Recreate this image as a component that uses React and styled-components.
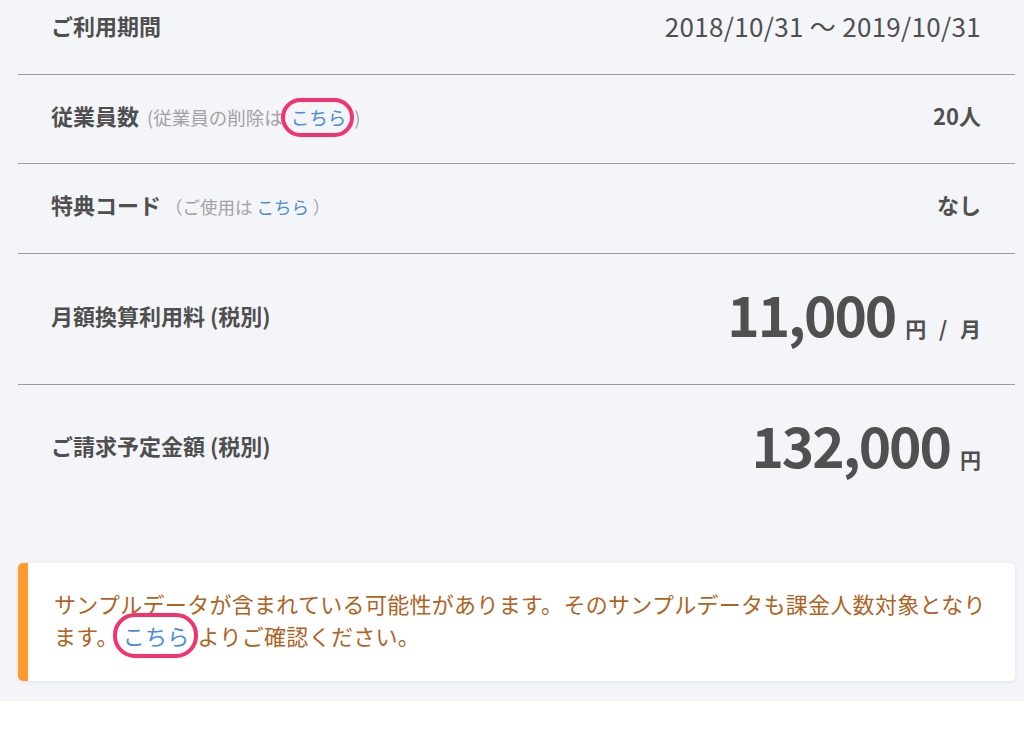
import React from "react";
import styled, { createGlobalStyle } from "styled-components";

const Global = createGlobalStyle`
  html, body { margin: 0; padding: 0; background: #ffffff; }
  body {
    font-family: "Noto Sans CJK JP", "Noto Sans", sans-serif;
    color: #505050;
    -webkit-font-smoothing: antialiased;
  }
`;

const Page = styled.div`
  background: #f4f5f9;
  padding: 0 9px 20px 18px;
  overflow: hidden;
  height: 701px;
  box-sizing: border-box;
`;

const Table = styled.div`
  margin-top: -15px;
  display: flex;
  flex-direction: column;
`;

const Row = styled.div`
  box-sizing: border-box;
  display: flex;
  align-items: center;
  justify-content: space-between;
  flex: none;
  height: ${(p) => p.$h}px;
  padding: 0 34px 9px 33px;
  border-bottom: ${(p) => (p.$last ? "none" : "1px solid #9c9c9c")};
`;

const Label = styled.div`
  font-size: 22px;
  font-weight: 700;
  color: #4f4f4f;
  display: flex;
  align-items: baseline;
  white-space: nowrap;
`;

const Note = styled.span`
  font-size: ${(p) => p.$size || 17.5}px;
  font-weight: 400;
  color: #a3a3a3;
  margin-left: ${(p) => p.$gap || 4}px;
`;

const Link = styled.a`
  color: #4a8ed6;
  text-decoration: none;
  position: relative;
  display: inline-block;
  margin: 0 ${(p) => p.$mr || 0}px 0 ${(p) => p.$ml || 0}px;
  &::after {
    content: "";
    display: ${(p) => (p.$circled ? "block" : "none")};
    position: absolute;
    left: -10px;
    right: -8px;
    top: -6px;
    bottom: -7px;
    border: 4px solid #f2336f;
    border-radius: 22px;
  }
`;

const Value = styled.div`
  font-size: ${(p) => p.$size || 22}px;
  font-weight: ${(p) => (p.$bold ? 700 : 400)};
  letter-spacing: ${(p) => p.$ls || 0}px;
  color: #505050;
  white-space: nowrap;
`;

const Amount = styled.div`
  display: flex;
  align-items: baseline;
  gap: 10px;
  color: #505050;
  white-space: nowrap;
`;

const BigNumber = styled.span`
  font-size: 55px;
  font-weight: 700;
  line-height: 1;
  letter-spacing: -2px;
`;

const Unit = styled.span`
  font-size: 21px;
  font-weight: 700;
  word-spacing: 8px;
`;

const Alert = styled.div`
  margin: 49px 0 0 0;
  background: #ffffff;
  border-left: 10px solid #ff9a2f;
  border-radius: 5px;
  box-shadow: 0 1px 4px rgba(0, 0, 0, 0.08);
  padding: 24px 26px 30px 26px;
  font-size: 22px;
  line-height: 32px;
  letter-spacing: 0.3px;
  color: #b0631f;
`;

export default function App() {
  return (
    <>
      <Global />
      <Page>
        <Table>
          <Row $h={90}>
            <Label>ご利用期間</Label>
            <Value $size={26} $ls={0.3}>2018/10/31 ～ 2019/10/31</Value>
          </Row>
          <Row $h={89}>
            <Label>
              従業員数
              <Note $size={18.5} $gap={8}>
                (従業員の削除は<Link href="#" $circled $ml={8} $mr={8}>こちら</Link>)
              </Note>
            </Label>
            <Value $bold>20人</Value>
          </Row>
          <Row $h={90}>
            <Label>
              特典コード
              <Note>
                （ご使用は <Link href="#">こちら</Link> ）
              </Note>
            </Label>
            <Value $bold>なし</Value>
          </Row>
          <Row $h={131}>
            <Label>月額換算利用料 (税別)</Label>
            <Amount>
              <BigNumber>11,000</BigNumber>
              <Unit>円 / 月</Unit>
            </Amount>
          </Row>
          <Row $h={129} $last>
            <Label>ご請求予定金額 (税別)</Label>
            <Amount>
              <BigNumber>132,000</BigNumber>
              <Unit>円</Unit>
            </Amount>
          </Row>
        </Table>
        <Alert>
          サンプルデータが含まれている可能性があります。そのサンプルデータも課金人数対象となります。
          <Link href="#" $circled $ml={4} $mr={8}>こちら</Link>よりご確認ください。
        </Alert>
      </Page>
    </>
  );
}
